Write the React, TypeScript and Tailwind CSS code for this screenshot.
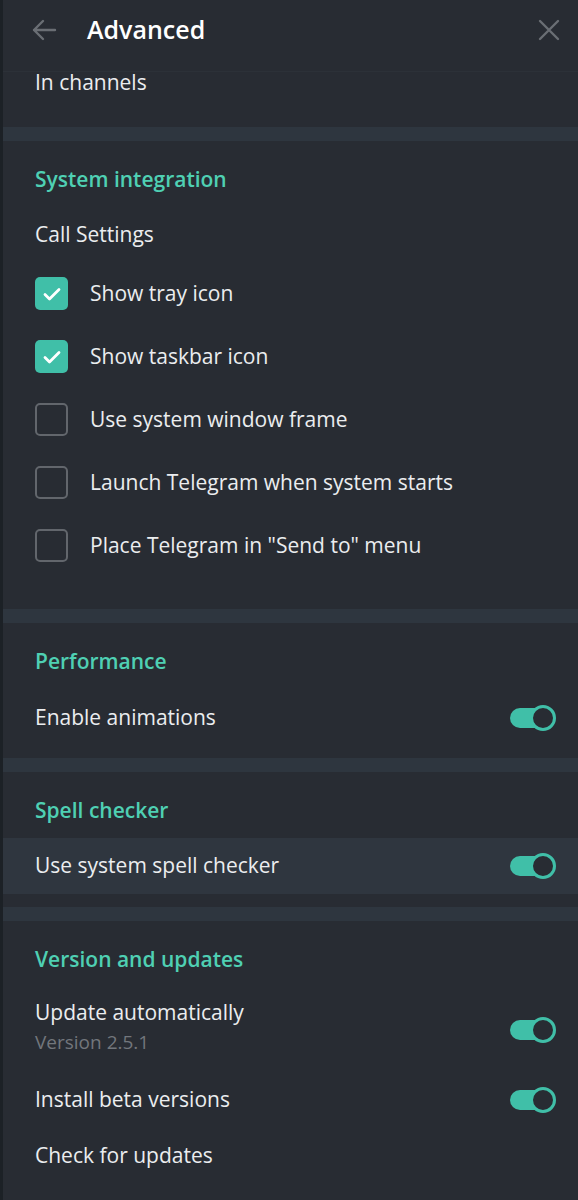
import React from "react";

const teal = "bg-[#40bfa8]";

function Toggle() {
    return (
        <div className="relative w-[46px] h-[26px] shrink-0">
            <div className={`absolute left-0 top-[3px] w-[38px] h-[20px] rounded-full ${teal}`} />
            <div className="absolute right-0 top-0 w-[26px] h-[26px] rounded-full border-[3px] border-[#40bfa8] bg-[#282c33]" />
        </div>
    );
}

function Checkbox({ checked }: { checked: boolean }) {
    if (checked) {
        return (
            <div className={`w-[33px] h-[33px] rounded-[5px] ${teal} flex items-center justify-center shrink-0`}>
                <svg width="20" height="20" viewBox="0 0 20 20" fill="none">
                    <path d="M3 10.5l4.5 4.5L17 5.5" stroke="#fff" strokeWidth="2.8" strokeLinecap="round" strokeLinejoin="round" />
                </svg>
            </div>
        );
    }
    return <div className="w-[33px] h-[33px] rounded-[5px] border-2 border-[#62666c] shrink-0" />;
}

function Band() {
    return <div className="h-[14px] bg-[#2e363f]" />;
}

function SectionTitle({ children }: { children: React.ReactNode }) {
    return (
        <div className="mt-[27px] h-[24px] px-[32px] flex items-center text-[21px] font-semibold text-[#4fd0b3]">
            {children}
        </div>
    );
}

function ToggleRow({ label, highlight }: { label: string; highlight?: boolean }) {
    return (
        <div className={`h-[56px] pl-[32px] pr-[22px] flex items-center justify-between ${highlight ? "bg-[#2f363f]" : ""}`}>
            <span className="text-[21px] text-[#ebedef]">{label}</span>
            <Toggle />
        </div>
    );
}

const checkboxes = [
    { label: "Show tray icon", checked: true },
    { label: "Show taskbar icon", checked: true },
    { label: "Use system window frame", checked: false },
    { label: "Launch Telegram when system starts", checked: false },
    { label: "Place Telegram in \"Send to\" menu", checked: false },
];

export default function App() {
    return (
        <div className="w-[578px] h-[1200px] flex bg-[#282c33] overflow-hidden" style={{ fontFamily: "'Open Sans', 'Noto Sans', sans-serif" }}>
            <div className="w-[3px] bg-[#1c2126] shrink-0" />
            <div className="flex-1 flex flex-col">
                {/* Header */}
                <div className="h-[72px] shrink-0 flex items-center pl-[27px] pr-[17px] border-b border-[#2c3138]">
                    <svg width="28" height="24" viewBox="0 0 28 24" fill="none" className="-mt-[12px]">
                        <path d="M25 12H4M13 3l-9 9 9 9" stroke="#6a6e74" strokeWidth="2.4" strokeLinecap="round" strokeLinejoin="round" />
                    </svg>
                    <span className="ml-[29px] -mt-[12px] text-[25px] font-semibold text-white">Advanced</span>
                    <div className="flex-1" />
                    <svg width="24" height="24" viewBox="0 0 24 24" fill="none" className="-mt-[12px]">
                        <path d="M3 3l18 18M21 3L3 21" stroke="#6a6e74" strokeWidth="2.4" strokeLinecap="round" />
                    </svg>
                </div>

                <div className="h-[55px] px-[32px]">
                    <div className="leading-[20px] text-[21px] text-[#ebedef]">In channels</div>
                </div>
                <Band />

                {/* System integration */}
                <div className="flex flex-col pb-[32px]">
                    <SectionTitle>System integration</SectionTitle>
                    <div className="mt-[16px] h-[54px] px-[32px] flex items-center text-[21px] text-[#ebedef]">Call Settings</div>
                    {checkboxes.map((c) => (
                        <div key={c.label} className="h-[63px] px-[32px] flex items-center gap-[22px]">
                            <Checkbox checked={c.checked} />
                            <span className="text-[21px] text-[#ebedef]">{c.label}</span>
                        </div>
                    ))}
                </div>
                <Band />

                {/* Performance */}
                <div className="flex flex-col pb-[12px]">
                    <SectionTitle>Performance</SectionTitle>
                    <div className="mt-[16px]">
                        <ToggleRow label="Enable animations" />
                    </div>
                </div>
                <Band />

                {/* Spell checker */}
                <div className="flex flex-col pb-[13px]">
                    <SectionTitle>Spell checker</SectionTitle>
                    <div className="mt-[15px]">
                        <ToggleRow label="Use system spell checker" highlight />
                    </div>
                </div>
                <Band />

                {/* Version and updates */}
                <div className="flex flex-col">
                    <SectionTitle>Version and updates</SectionTitle>
                    <div className="mt-[16px] h-[84px] pl-[32px] pr-[22px] flex items-center justify-between">
                        <div className="flex flex-col -mt-[7px]">
                            <span className="text-[21px] leading-[26px] text-[#ebedef]">Update automatically</span>
                            <span className="mt-[5px] text-[19px] leading-[24px] text-[#72767c]">Version 2.5.1</span>
                        </div>
                        <Toggle />
                    </div>
                    <ToggleRow label="Install beta versions" />
                    <div className="h-[56px] px-[32px] flex items-center text-[21px] text-[#ebedef]">Check for updates</div>
                </div>
            </div>
        </div>
    );
}
